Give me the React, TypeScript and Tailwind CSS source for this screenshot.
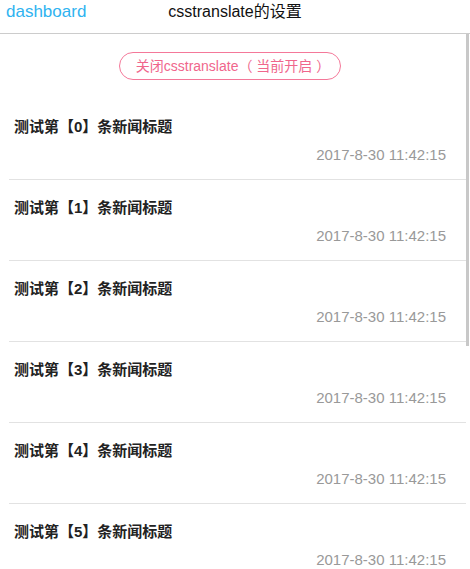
const items = [0, 1, 2, 3, 4, 5];

function NewsItem({ index }: { index: number }) {
  return (
    <li className="border-b border-[#e2e2e2] pl-[5px] pr-[20px] pt-[18px] pb-[14px]">
      <div className="text-[15px] leading-[20px] font-bold text-[#222]">
        测试第【{index}】条新闻标题
      </div>
      <div className="mt-[8px] text-right text-[15px] leading-[20px] text-[#999]">
        2017-8-30 11:42:15
      </div>
    </li>
  );
}

export default function App() {
  return (
    <div
      className="relative h-[569px] w-[470px] overflow-hidden bg-white"
      style={{ fontFamily: '"Liberation Sans", "Noto Sans CJK SC", sans-serif' }}
    >
      <header className="relative flex h-[34px] items-start border-b border-[#cccccc]">
        <span className="pl-[6px] text-[17px] leading-[24px] text-[#2fb3f0]">dashboard</span>
        <span className="absolute left-0 right-0 top-0 text-center text-[16px] leading-[24px] text-[#111]">
          csstranslate的设置
        </span>
      </header>

      <main className="pr-[4px]">
        <div className="flex justify-center pt-[18px] pb-[19px] pr-[6px]">
          <button className="h-[28px] rounded-full border border-[#f47899] pl-[16px] pr-[10px] text-[14px] leading-[26px] text-[#f0668c]">
            关闭csstranslate（ 当前开启 ）
          </button>
        </div>
        <ul className="ml-[9px]">
          {items.map((i) => (
            <NewsItem key={i} index={i} />
          ))}
        </ul>
      </main>

      <div className="absolute right-[1px] top-[34px] h-[312px] w-[3px] bg-[#c8c8c8]" />
    </div>
  );
}
